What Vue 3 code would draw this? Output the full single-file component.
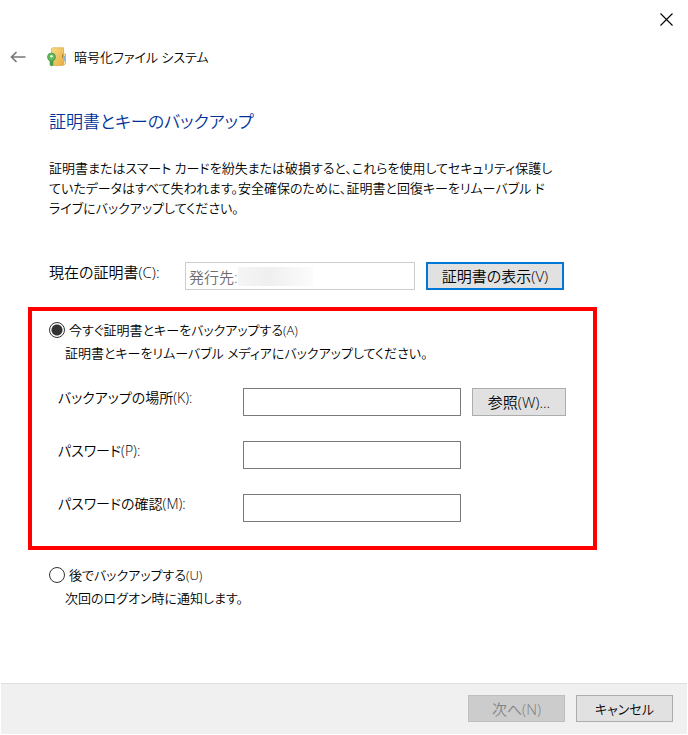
<template>
    <div class="wizard">
        <div class="titlebar">
            <button class="icon-button close" aria-label="閉じる">
                <svg width="13" height="13" viewBox="0 0 13 13">
                    <path d="M.5 .5l12 12M12.5 .5l-12 12" fill="none" stroke="#000" stroke-width="1.1" />
                </svg>
            </button>
        </div>

        <header class="header">
            <button class="icon-button back" aria-label="戻る">
                <svg width="16" height="12" viewBox="0 0 16 12">
                    <path d="M15.5 6H1.5M6.500 1L1.500 6l5 5" fill="none" stroke="#777" stroke-width="1.7" />
                </svg>
            </button>
            <svg class="app-icon" width="20" height="20" viewBox="0 0 20 20">
                <defs>
                    <linearGradient id="folder" x1="0" y1="0" x2="1" y2="1">
                        <stop offset="0" stop-color="#fbdc85" />
                        <stop offset="1" stop-color="#e6ae45" />
                    </linearGradient>
                </defs>
                <path d="M15 7h3.500v9.500l-1.500 1.500h-3z" fill="#f3e3b8" stroke="#c99a3e" stroke-width=".7" />
                <path d="M17.500 9v5" stroke="#8fb4d4" stroke-width="1" />
                <path d="M4.500 1.500L6 .8h10.500v16.700L15 18.500H4.500z" fill="url(#folder)" stroke="#d9a441" stroke-width=".7" />
                <path d="M15.500 7.500v3" stroke="#a97a24" stroke-width="1" />
                <path d="M3 11h3v6.500L4.500 19.200 3 17.700z" fill="#4ca64c" stroke="#39893c" stroke-width=".6" />
                <circle cx="4.500" cy="10" r="4" fill="#62b95d" stroke="#409344" stroke-width=".7" />
                <circle cx="4.500" cy="9.300" r="1.300" fill="#e9f7df" />
            </svg>
            <span>暗号化ファイル システム</span>
        </header>

        <main class="content">
            <h1>証明書とキーのバックアップ</h1>
            <p class="description">
                証明書またはスマート カードを紛失または破損すると、これらを使用してセキュリティ保護し<br>
                ていたデータはすべて失われます。安全確保のために、証明書と回復キーをリムーバブル ド<br>
                ライブにバックアップしてください。
            </p>

            <div class="certificate">
                <label for="certificate">現在の証明書(C):</label>
                <div class="certificate-field">
                    <input id="certificate" type="text" value="発行先:" readonly>
                    <span class="redacted"></span>
                </div>
                <button class="button primary">証明書の表示(V)</button>
            </div>

            <section class="backup-now">
                <label class="option">
                    <input v-model="mode" type="radio" name="mode" value="now">
                    今すぐ証明書とキーをバックアップする(A)
                </label>
                <p class="hint">証明書とキーをリムーバブル メディアにバックアップしてください。</p>
                <div class="fields">
                    <template v-for="field in fields" :key="field.id">
                        <label :for="field.id">{{ field.label }}</label>
                        <input :id="field.id" v-model="form[field.id]" :type="field.type">
                        <button v-if="field.browse" class="button">参照(W)...</button>
                        <span v-else></span>
                    </template>
                </div>
            </section>

            <section class="backup-later">
                <label class="option">
                    <input v-model="mode" type="radio" name="mode" value="later">
                    後でバックアップする(U)
                </label>
                <p class="hint">次回のログオン時に通知します。</p>
            </section>
        </main>

        <footer class="footer">
            <button class="button" disabled>次へ(N)</button>
            <button class="button cancel">キャンセル</button>
        </footer>
    </div>
</template>

<script setup>
import { reactive, ref } from 'vue';

const mode = ref('now');

const form = reactive({
    location: '',
    password: '',
    confirm: '',
});

const fields = [
    { id: 'location', label: 'バックアップの場所(K):', type: 'text', browse: true },
    { id: 'password', label: 'パスワード(P):', type: 'password' },
    { id: 'confirm', label: 'パスワードの確認(M):', type: 'password' },
];
</script>

<style>
body {
    margin: 0;
    background: #fff;
}
</style>

<style scoped>
.wizard {
    display: flex;
    flex-direction: column;
    box-sizing: border-box;
    min-height: 100vh;
    padding: 0 1px 1px;
    background: #fff;
    color: #000;
    font-family: "Open Sans", "Noto Sans CJK JP", sans-serif;
    font-size: 13px;
    font-weight: 350;
    font-feature-settings: "palt";
    line-height: 20px;
}

input,
button {
    box-sizing: border-box;
    font: inherit;
    font-feature-settings: inherit;
    color: inherit;
}

h1,
p {
    margin: 0;
}

.titlebar {
    display: flex;
    justify-content: flex-end;
    padding: 13px 14px 0 0;
}

.icon-button {
    display: flex;
    padding: 0;
    border: none;
    background: none;
}

.header {
    display: flex;
    align-items: center;
    padding: 21px 9px 0;
}

.app-icon {
    margin: 0 7px 0 21px;
}

.content {
    flex: 1;
    padding: 41px 28px 0 27px;
}

h1 {
    padding-left: 21px;
    font-size: 17px;
    font-weight: 350;
    line-height: 28px;
    color: #003399;
}

.description {
    padding: 22px 0 0 21px;
    white-space: nowrap;
}

.certificate {
    display: flex;
    align-items: flex-start;
    padding: 44px 0 0 21px;
    font-size: 15px;
}

.certificate label {
    width: 136px;
}

.certificate-field {
    position: relative;
    width: 230px;
    margin-right: 11px;
}

.certificate-field input {
    display: block;
    width: 100%;
    height: 28px;
    padding: 0 3px;
    border: 1px solid #ccc;
    color: #6d6d6d;
}

.redacted {
    position: absolute;
    top: 5px;
    left: 53px;
    width: 75px;
    height: 19px;
    background: linear-gradient(90deg, #f5f5f5, #efefef 40%, #fcfcfc);
}

.button {
    height: 28px;
    min-width: 94px;
    padding: 0;
    border: 1px solid #adadad;
    background: #e1e1e1;
    font-size: 15px;
}

.button:disabled {
    border-color: #bfbfbf;
    background: #ccc;
    color: #838383;
}

.button.primary {
    width: 138px;
    border: 2px solid #0078d7;
}

.button.cancel {
    font-size: 13px;
}

.backup-now {
    box-sizing: border-box;
    max-width: 569px;
    margin-top: 17px;
    padding: 9px 0 24px 17px;
    border: 4px solid #f00;
}

.option {
    display: flex;
    align-items: center;
    gap: 4px;
}

.option input {
    appearance: none;
    width: 16px;
    height: 16px;
    margin: 0;
    border: 1px solid #333;
    border-radius: 50%;
}

.option input:checked {
    background: radial-gradient(circle, #333 5px, #fff 6px);
}

.hint {
    padding: 3px 0 0 16px;
}

.fields {
    display: grid;
    grid-template-columns: 185px 218px 105px;
    row-gap: 25px;
    padding: 25px 0 0 9px;
}

.fields label {
    font-size: 14px;
}

.fields input {
    width: 218px;
    height: 28px;
    padding: 0 4px;
    border: 1px solid #7a7a7a;
}

.fields .button {
    margin-left: 11px;
}

.backup-later {
    padding: 15px 0 0 21px;
}

.footer {
    display: flex;
    justify-content: flex-end;
    gap: 11px;
    padding: 11px 14px 12px;
    border-top: 1px solid #dfdfdf;
    background: #f0f0f0;
}

.footer .button {
    width: 97px;
    height: 27px;
}
</style>
